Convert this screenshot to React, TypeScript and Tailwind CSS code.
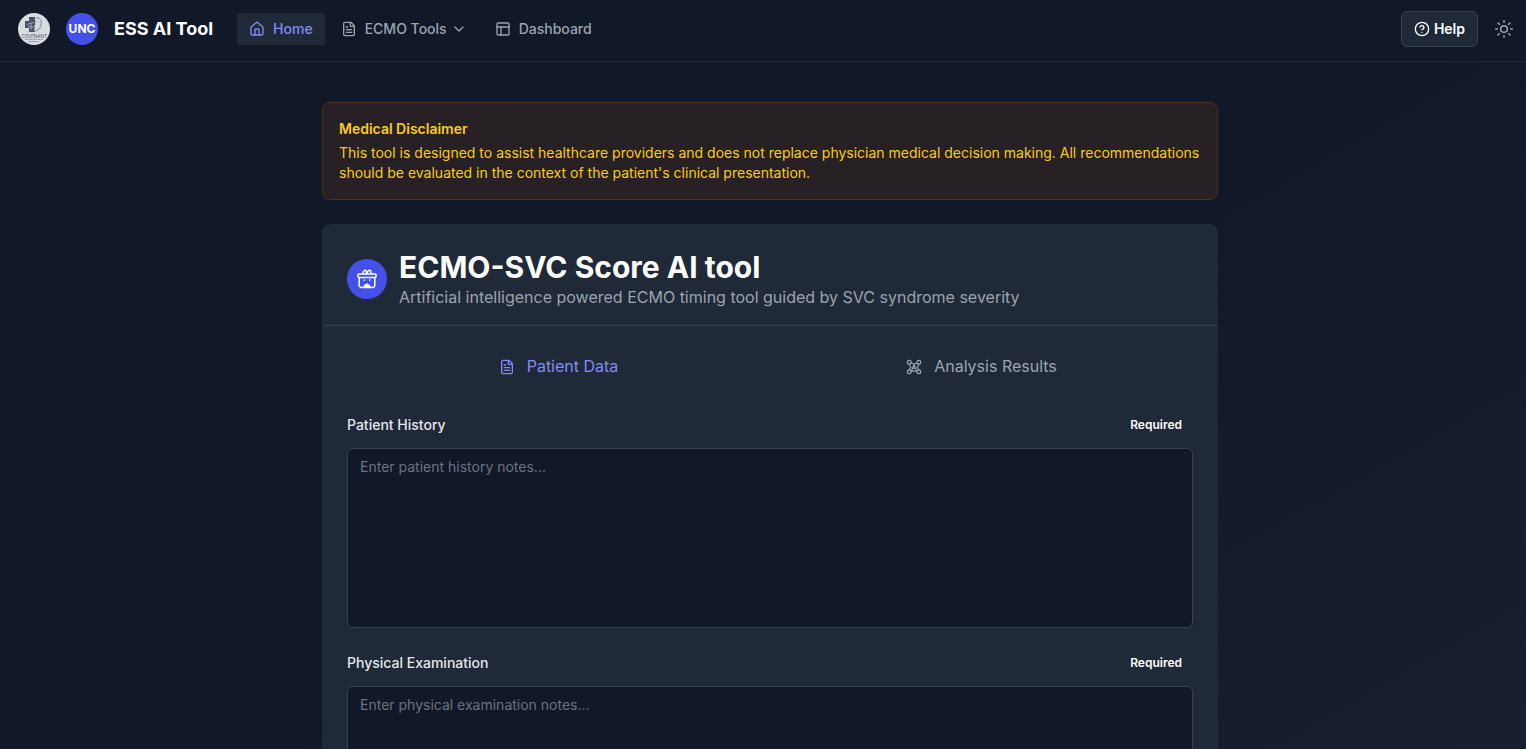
import React, { useState } from 'react';
import { House, FileText, ChevronDown, PanelsTopLeft, CircleHelp, Sun } from 'lucide-react';

type TabId = 'data' | 'results';

const FIELDS = [
  { id: 'history', label: 'Patient History', placeholder: 'Enter patient history notes...' },
  { id: 'exam', label: 'Physical Examination', placeholder: 'Enter physical examination notes...' },
];

// ==================== ICONS ====================
const CovenantLogo: React.FC = () => (
  <svg viewBox="0 0 32 32" className="size-8" aria-label="Covenant">
    <circle cx="16" cy="16" r="16" fill="#d9dcdf" />
    <path d="M11 4h6v4h2v7h-2v4h-6v-4H7V8h4z" fill="#46536a" />
    <path d="M18 5c5-1 6 3 5 7-1 4-3 6-7 6" fill="#d3d7db" stroke="#7b8594" strokeWidth="0.9" />
    <path d="M9 12c3-3 6-1 8-3M10 14c3-1 5 1 7-1M13 10v7" fill="none" stroke="#aeb7c2" strokeWidth="0.9" />
    <text x="16" y="24.5" textAnchor="middle" fontSize="4.6" fontFamily="Inter, sans-serif" fill="#4b586c">COVENANT</text>
    <path d="M7 26.3h18M11 28.6h10" stroke="#7b8594" strokeWidth="0.9" strokeDasharray="2 0.6" />
  </svg>
);

const KitIcon: React.FC = () => (
  <svg viewBox="0 0 20 20" className="size-5" fill="none" stroke="currentColor" strokeWidth="1.5" strokeLinecap="round" strokeLinejoin="round">
    <rect x="0.8" y="5" width="18.4" height="3.4" rx="1.4" />
    <path d="M2.2 8.6v7.6a2.2 2.2 0 0 0 2.2 2.2h11.2a2.2 2.2 0 0 0 2.2-2.2V8.6" />
    <path d="M6 4.6C6 2.4 7 1.2 8.4 1.2s1.3 1.6.6 3.4M10.4 4.6c0-2.2 1-3.4 2.2-3.4s1.7 1.6 1.2 3.4" strokeWidth="1.4" />
    <path d="M7.2 11v.2M12.8 11v.2" />
    <path d="M6.8 18.2v-2l1.7-.4.5-1.1h2l.5 1.1 1.7.4v2z" fill="currentColor" strokeWidth="0.4" />
  </svg>
);

const NodesIcon: React.FC = () => (
  <svg viewBox="0 0 16 16" className="mt-0.5 size-4" fill="none" stroke="currentColor" strokeWidth="1.2" strokeLinecap="round" strokeLinejoin="round">
    <circle cx="3.2" cy="3.2" r="1.9" />
    <circle cx="12.8" cy="3.2" r="1.9" />
    <circle cx="3.2" cy="12.8" r="1.9" />
    <circle cx="12.8" cy="12.8" r="1.9" />
    <path d="M5 4.2c2 1 4 1 6 0M3.2 5.2c.2 1.6.8 2.6 1.8 3.4-1 .6-1.6 1.4-1.8 2.2M12.8 5.2c-.2 1.6-.8 2.6-1.8 3.4 1 .6 1.6 1.4 1.8 2.2M5 12.2h6" />
    <path d="M8 5.6 5.6 11.6M8 5.6l2.4 6M6.4 9.2h3.2" />
  </svg>
);

// ==================== APP ====================
const App: React.FC = () => {
  const [tab, setTab] = useState<TabId>('data');
  const [notes, setNotes] = useState<Record<string, string>>({});

  const tabClass = (id: TabId) =>
    tab === id
      ? 'flex items-center justify-center gap-3 text-[#818cf8]'
      : 'flex items-center justify-center gap-3 text-[#9ca3af]';

  return (
    <div className="min-h-screen bg-linear-to-br from-[#111827] from-50% to-[#192130] font-['Inter',sans-serif] text-white">
      <header className="flex items-center justify-between border-b border-[#1f2937] bg-[#111827] pt-[11px] pr-3 pb-[14px] pl-[18px]">
        <div className="flex items-center">
          <a href="#" className="flex items-center gap-4">
            <CovenantLogo />
            <span className="flex size-8 items-center justify-center rounded-full bg-[#4351e8] text-xs font-bold">UNC</span>
            <span className="text-lg font-bold">ESS AI Tool</span>
          </a>
          <nav className="ml-6 flex items-center gap-1 text-sm font-medium text-[#9ca3af]">
            <a href="#" className="flex h-8 items-center gap-2 rounded-xs bg-[#1f2937] px-3 text-[#818cf8]">
              <House className="size-4" />
              Home
            </a>
            <button type="button" className="flex h-8 items-center gap-2 px-3">
              <FileText className="size-4" />
              <span className="flex items-center gap-1">
                ECMO Tools
                <ChevronDown className="size-4" />
              </span>
            </button>
            <a href="#" className="flex h-8 items-center gap-2 px-3">
              <PanelsTopLeft className="size-4" />
              Dashboard
            </a>
          </nav>
        </div>
        <div className="flex items-center gap-4">
          <button type="button" className="flex h-9 items-center gap-1 rounded-md border border-[#374151] bg-[#1f2937] px-3 text-sm font-semibold">
            <CircleHelp className="size-4" />
            Help
          </button>
          <button type="button" aria-label="Toggle theme" className="text-[#9ca3af]">
            <Sun className="size-5" strokeWidth={1.8} />
          </button>
        </div>
      </header>

      <main className="pt-10 pr-[18px] pl-8">
        <div className="mx-auto max-w-4xl">
          <section className="rounded-lg border border-[#4a2f20] bg-[#272024] p-4 text-sm text-[#facc15]">
            <h2 className="mb-1 font-semibold">Medical Disclaimer</h2>
            <p>
              This tool is designed to assist healthcare providers and does not replace physician medical decision
              making. All recommendations should be evaluated in the context of the patient's clinical presentation.
            </p>
          </section>

          <section className="mt-6 rounded-lg border border-[#1f2937] bg-[#1f2937]">
            <div className="flex items-center gap-3 border-b border-[#374151] px-6 pt-6 pb-4">
              <span className="flex size-10 items-center justify-center rounded-full bg-[#4351e8]">
                <KitIcon />
              </span>
              <div>
                <h1 className="text-3xl font-bold">ECMO-SVC Score AI tool</h1>
                <p className="text-[#9ca3af]">
                  Artificial intelligence powered ECMO timing tool guided by SVC syndrome severity
                </p>
              </div>
            </div>

            <div className="px-6 pt-7 pb-6">
              <div role="tablist" className="grid grid-cols-2">
                <button type="button" role="tab" aria-selected={tab === 'data'} onClick={() => setTab('data')} className={tabClass('data')}>
                  <FileText className="mt-0.5 size-4" />
                  Patient Data
                </button>
                <button type="button" role="tab" aria-selected={tab === 'results'} onClick={() => setTab('results')} className={tabClass('results')}>
                  <NodesIcon />
                  Analysis Results
                </button>
              </div>

              <div className="mt-9 space-y-6">
                {FIELDS.map(field => (
                  <div key={field.id}>
                    <div className="mb-3 flex items-center justify-between">
                      <label htmlFor={field.id} className="text-sm font-medium text-[#e5e7eb]">
                        {field.label}
                      </label>
                      <span className="rounded-full border border-transparent px-2.5 py-0.5 text-xs font-semibold">
                        Required
                      </span>
                    </div>
                    <textarea
                      id={field.id}
                      placeholder={field.placeholder}
                      value={notes[field.id] ?? ''}
                      onChange={e => setNotes({ ...notes, [field.id]: e.target.value })}
                      className="block h-[180px] w-full resize-none rounded-md border border-[#374151] bg-[#111827] px-3 py-2 text-sm placeholder-[#6b7280] outline-none focus:border-[#818cf8]"
                    />
                  </div>
                ))}
              </div>
            </div>
          </section>
        </div>
      </main>
    </div>
  );
};

export default App;
